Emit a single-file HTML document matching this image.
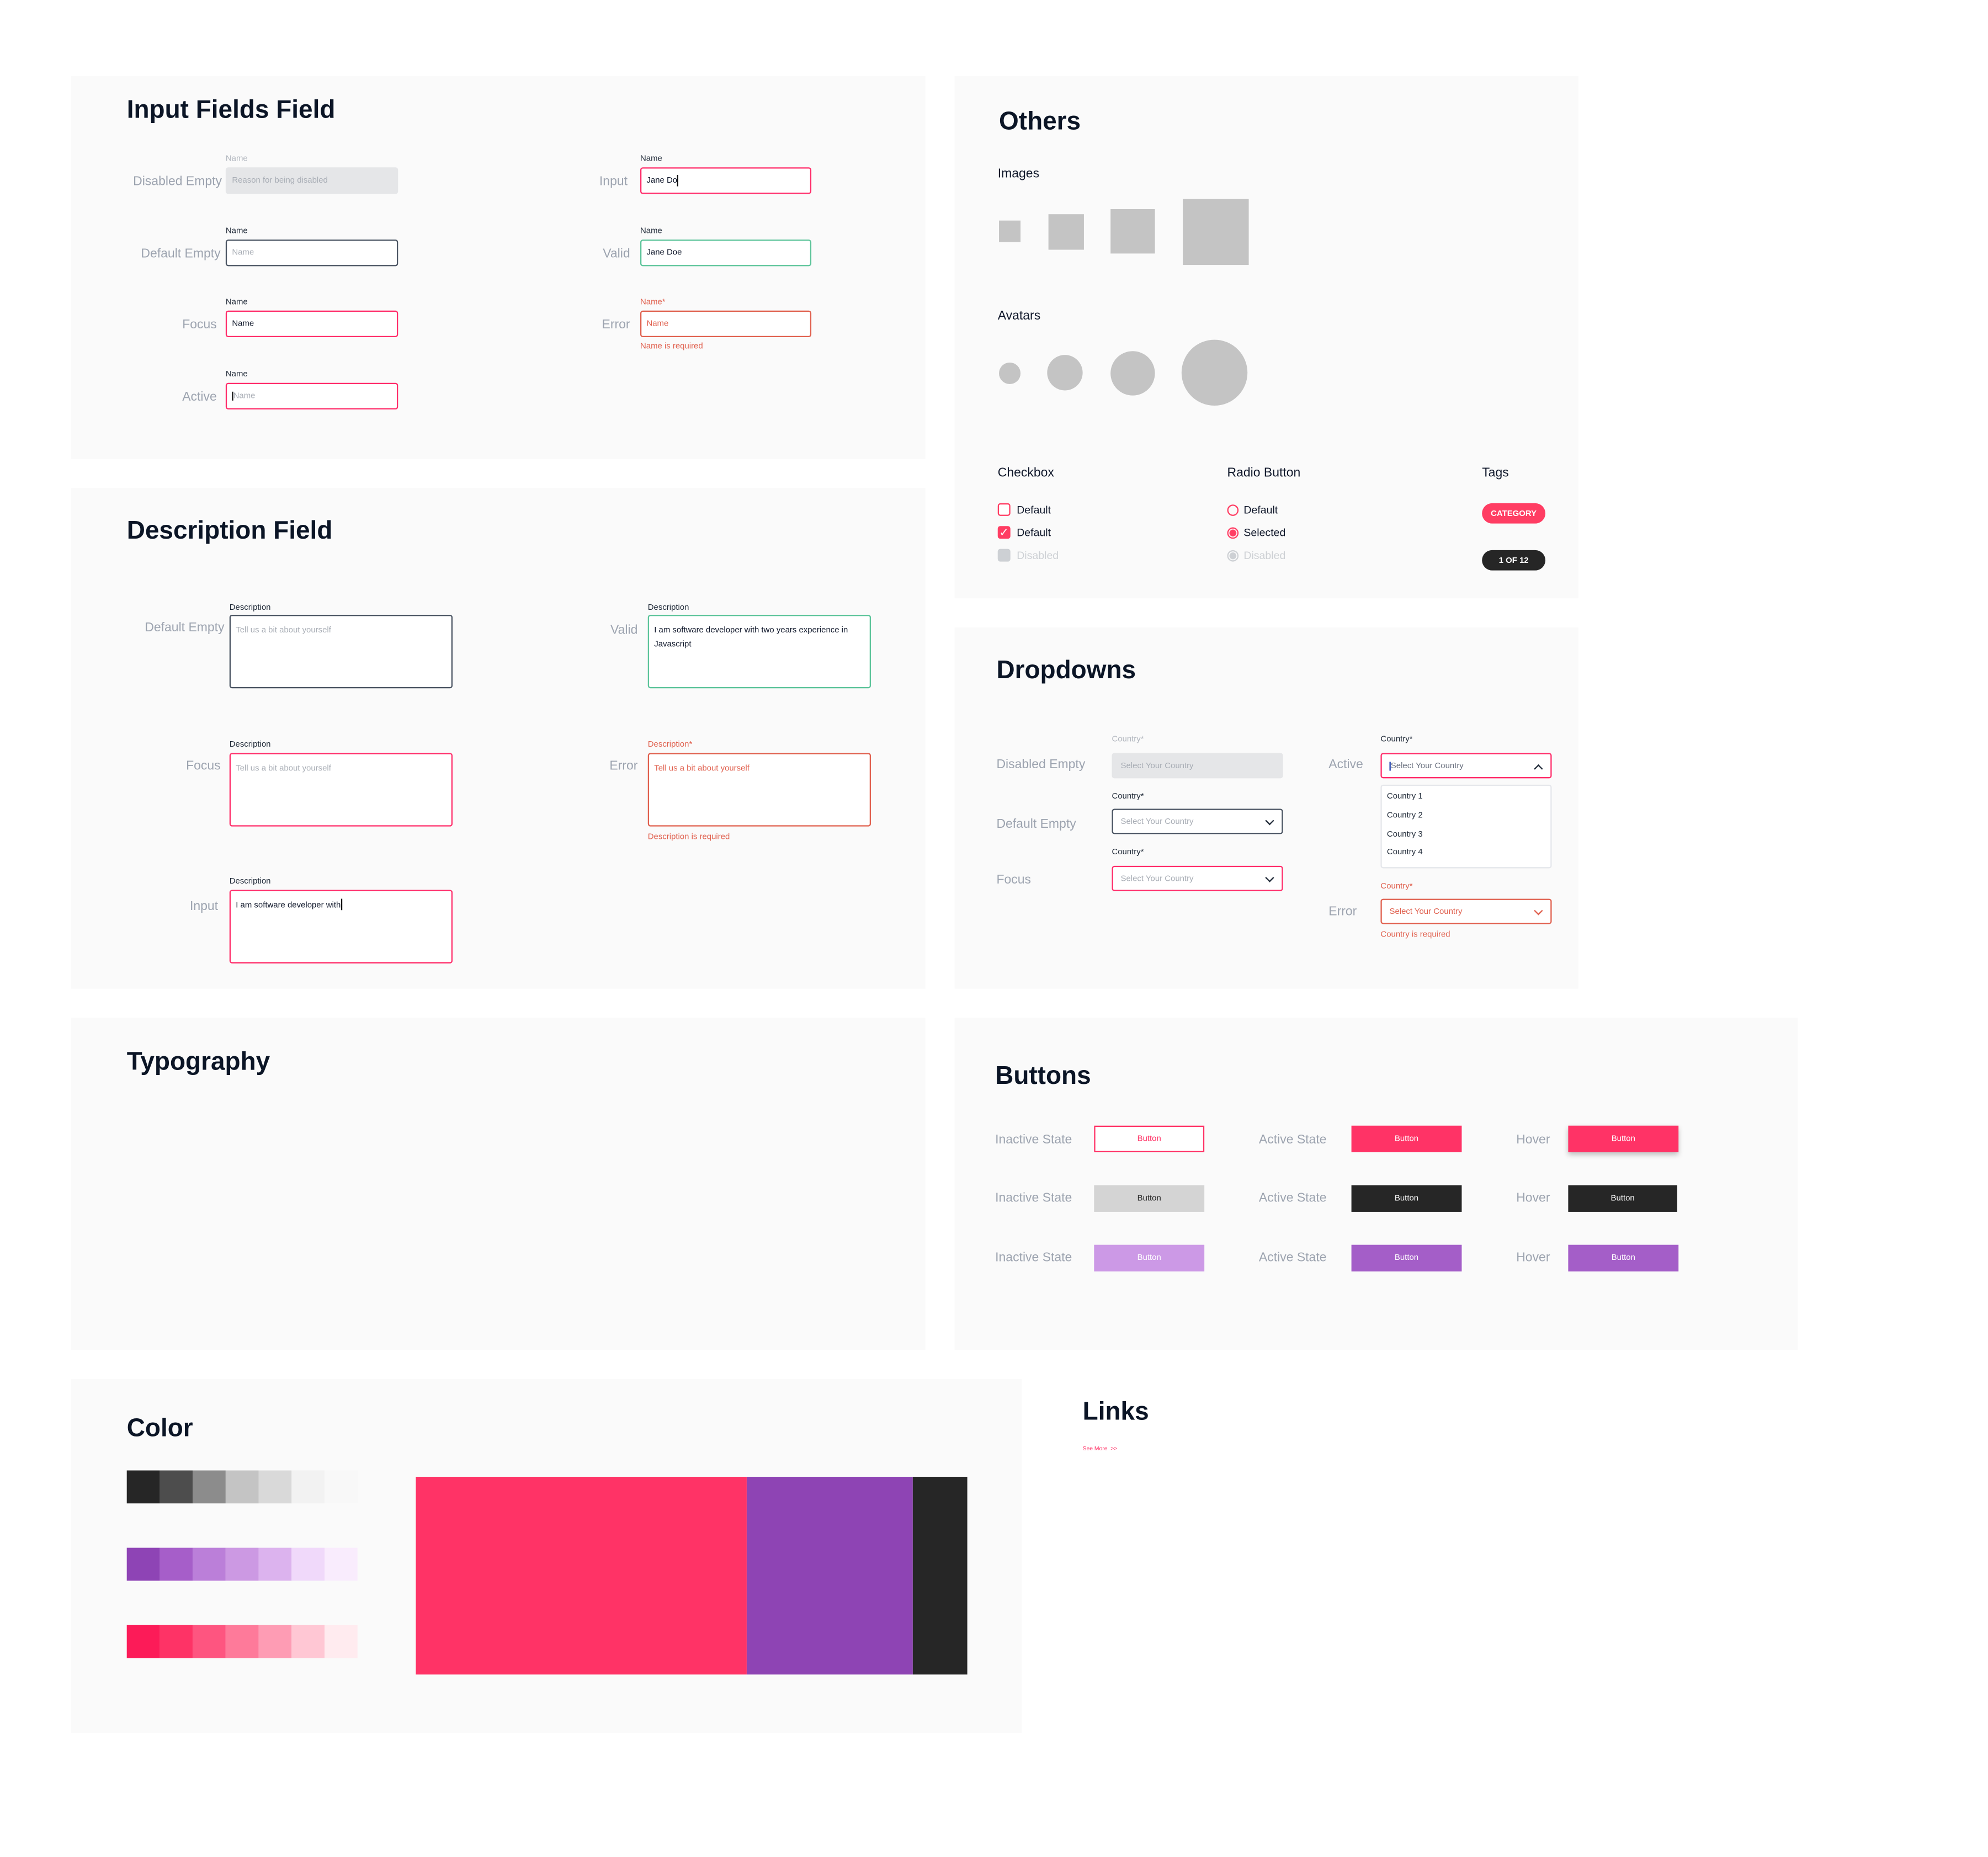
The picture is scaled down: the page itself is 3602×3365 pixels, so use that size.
<!DOCTYPE html>
<html><head><meta charset="utf-8">
<style>
html,body{margin:0;padding:0;background:#fff;}
body{width:3602px;height:3361px;overflow:hidden;}
#w{position:absolute;left:0;top:0;width:1570px;height:1465px;transform:scale(2.297);transform-origin:0 0;font-family:"Liberation Sans",sans-serif;color:#0f172a;}
.p{position:absolute;background:#fafafa;}
.a{position:absolute;white-space:nowrap;}
h2{position:absolute;margin:0;font-size:20px;font-weight:bold;color:#0b1526;white-space:nowrap;}
.lab{position:absolute;font-size:10px;color:#9ca3af;white-space:nowrap;}
.sm{position:absolute;font-size:6.5px;color:#1f2937;white-space:nowrap;}
.box{position:absolute;background:#fff;border:0.6px solid #ff2d6a;border-radius:2px;box-sizing:border-box;font-size:6.5px;padding:0 4px;display:flex;align-items:center;white-space:nowrap;}
.ta{align-items:flex-start;padding-top:6px;line-height:11px;white-space:normal;}
.btn{position:absolute;width:87px;height:21px;font-size:6.5px;display:flex;align-items:center;justify-content:center;color:#fff;box-sizing:border-box;}
.sw{position:absolute;width:26px;height:26px;}
.chev{position:absolute;right:7px;top:6px;width:4px;height:4px;border-right:0.8px solid #1f2937;border-bottom:0.8px solid #1f2937;transform:rotate(45deg);}
</style></head><body><div id="w">

<!-- Input fields -->
<div class="p" style="left:56px;top:60px;width:674px;height:302px"></div>
<h2 style="left:100px;top:76px">Input Fields Field</h2>
<div class="sm" style="left:178px;top:122px;color:#b0b5bd">Name</div>
<div class="lab" style="right:1395px;top:138px">Disabled Empty</div>
<div class="box" style="left:178px;top:132px;width:136px;height:21px;background:#e5e6e8;border-color:#e5e6e8;color:#a8adb5">Reason for being disabled</div>
<div class="sm" style="left:178px;top:179px">Name</div>
<div class="lab" style="right:1396px;top:195px">Default Empty</div>
<div class="box" style="left:178px;top:189px;width:136px;height:21px;border-color:#4b5563;color:#a8adb5">Name</div>
<div class="sm" style="left:178px;top:235px">Name</div>
<div class="lab" style="right:1399px;top:251px">Focus</div>
<div class="box" style="left:178px;top:245px;width:136px;height:21px">Name</div>
<div class="sm" style="left:178px;top:292px">Name</div>
<div class="lab" style="right:1399px;top:308px">Active</div>
<div class="box" style="left:178px;top:302px;width:136px;height:21px;color:#a8adb5"><span style="border-left:0.6px solid #111">Name</span></div>

<div class="sm" style="left:505px;top:122px">Name</div>
<div class="lab" style="right:1075px;top:138px">Input</div>
<div class="box" style="left:505px;top:132px;width:135px;height:21px">Jane Do<span style="border-left:0.6px solid #111;height:9px"></span></div>
<div class="sm" style="left:505px;top:179px">Name</div>
<div class="lab" style="right:1073px;top:195px">Valid</div>
<div class="box" style="left:505px;top:189px;width:135px;height:21px;border-color:#5cc49a">Jane Doe</div>
<div class="sm" style="left:505px;top:235px;color:#e0604e">Name*</div>
<div class="lab" style="right:1073px;top:251px">Error</div>
<div class="box" style="left:505px;top:245px;width:135px;height:21px;border-color:#e0604e;color:#e0604e">Name</div>
<div class="sm" style="left:505px;top:270px;color:#e0604e">Name is required</div>

<!-- Description -->
<div class="p" style="left:56px;top:385px;width:674px;height:395px"></div>
<h2 style="left:100px;top:408px">Description Field</h2>
<div class="sm" style="left:181px;top:476px">Description</div>
<div class="lab" style="right:1393px;top:490px">Default Empty</div>
<div class="box ta" style="left:181px;top:485px;width:176px;height:58px;border-color:#4b5563;color:#a8adb5">Tell us a bit about yourself</div>
<div class="sm" style="left:181px;top:584px">Description</div>
<div class="lab" style="right:1396px;top:599px">Focus</div>
<div class="box ta" style="left:181px;top:594px;width:176px;height:58px;color:#a8adb5">Tell us a bit about yourself</div>
<div class="sm" style="left:181px;top:692px">Description</div>
<div class="lab" style="right:1398px;top:710px">Input</div>
<div class="box ta" style="left:181px;top:702px;width:176px;height:58px">I am software developer with<span style="border-left:0.6px solid #111;height:9px;display:inline-block;vertical-align:middle"></span></div>

<div class="sm" style="left:511px;top:476px">Description</div>
<div class="lab" style="right:1067px;top:492px">Valid</div>
<div class="box ta" style="left:511px;top:485px;width:176px;height:58px;border-color:#5cc49a">I am software developer with two years experience in Javascript</div>
<div class="sm" style="left:511px;top:584px;color:#e0604e">Description*</div>
<div class="lab" style="right:1067px;top:599px">Error</div>
<div class="box ta" style="left:511px;top:594px;width:176px;height:58px;border-color:#e0604e;color:#e0604e">Tell us a bit about yourself</div>
<div class="sm" style="left:511px;top:657px;color:#e0604e">Description is required</div>

<!-- Others -->
<div class="p" style="left:753px;top:60px;width:492px;height:412px"></div>
<h2 style="left:788px;top:85px">Others</h2>
<div class="a" style="left:787px;top:132px;font-size:10px">Images</div>
<div class="a" style="left:788px;top:174px;width:17px;height:17px;background:#c4c4c4"></div>
<div class="a" style="left:827px;top:169px;width:28px;height:28px;background:#c4c4c4"></div>
<div class="a" style="left:876px;top:165px;width:35px;height:35px;background:#c4c4c4"></div>
<div class="a" style="left:933px;top:157px;width:52px;height:52px;background:#c4c4c4"></div>
<div class="a" style="left:787px;top:244px;font-size:10px">Avatars</div>
<div class="a" style="left:788px;top:286px;width:17px;height:17px;border-radius:50%;background:#c4c4c4"></div>
<div class="a" style="left:826px;top:280px;width:28px;height:28px;border-radius:50%;background:#c4c4c4"></div>
<div class="a" style="left:876px;top:277px;width:35px;height:35px;border-radius:50%;background:#c4c4c4"></div>
<div class="a" style="left:932px;top:268px;width:52px;height:52px;border-radius:50%;background:#c4c4c4"></div>

<div class="a" style="left:787px;top:368px;font-size:10px">Checkbox</div>
<div class="a" style="left:787px;top:397px;width:10px;height:10px;border:0.8px solid #ff3d63;border-radius:2px;box-sizing:border-box;background:#fff"></div>
<div class="a" style="left:802px;top:397px;font-size:8.5px">Default</div>
<div class="a" style="left:787px;top:415px;width:10px;height:10px;background:#ff3d63;border-radius:2px;color:#fff;font-size:9px;line-height:10px;text-align:center">✓</div>
<div class="a" style="left:802px;top:415px;font-size:8.5px">Default</div>
<div class="a" style="left:787px;top:433px;width:10px;height:10px;background:#cdd0d4;border-radius:2px"></div>
<div class="a" style="left:802px;top:433px;font-size:8.5px;color:#cdd0d4">Disabled</div>

<div class="a" style="left:968px;top:368px;font-size:10px">Radio Button</div>
<div class="a" style="left:968px;top:398px;width:9px;height:9px;border:0.8px solid #ff3d63;border-radius:50%;box-sizing:border-box"></div>
<div class="a" style="left:981px;top:397px;font-size:8.5px">Default</div>
<div class="a" style="left:968px;top:416px;width:9px;height:9px;border:0.8px solid #ff3d63;border-radius:50%;box-sizing:border-box;background:radial-gradient(#ff3d63 0 2.5px,#fff 3px)"></div>
<div class="a" style="left:981px;top:415px;font-size:8.5px">Selected</div>
<div class="a" style="left:968px;top:434px;width:9px;height:9px;border:0.8px solid #cdd0d4;border-radius:50%;box-sizing:border-box;background:radial-gradient(#cdd0d4 0 2.5px,#fff 3px)"></div>
<div class="a" style="left:981px;top:433px;font-size:8.5px;color:#cdd0d4">Disabled</div>

<div class="a" style="left:1169px;top:368px;font-size:10px">Tags</div>
<div class="a" style="left:1169px;top:397px;width:50px;height:16px;border-radius:8px;background:#ff3d63;color:#fff;font-size:6.5px;font-weight:bold;display:flex;align-items:center;justify-content:center">CATEGORY</div>
<div class="a" style="left:1169px;top:434px;width:50px;height:16px;border-radius:8px;background:#262626;color:#fff;font-size:6.5px;font-weight:bold;display:flex;align-items:center;justify-content:center">1 OF 12</div>

<!-- Dropdowns -->
<div class="p" style="left:753px;top:495px;width:492px;height:285px"></div>
<h2 style="left:786px;top:518px">Dropdowns</h2>
<div class="sm" style="left:877px;top:580px;color:#b0b5bd">Country*</div>
<div class="lab" style="left:786px;top:598px">Disabled Empty</div>
<div class="box" style="left:877px;top:594px;width:135px;height:20px;background:#e5e6e8;border-color:#e5e6e8;color:#a8adb5;padding-left:6px">Select Your Country</div>
<div class="sm" style="left:877px;top:625px">Country*</div>
<div class="lab" style="left:786px;top:645px">Default Empty</div>
<div class="box" style="left:877px;top:638px;width:135px;height:20px;border-color:#4b5563;color:#a8adb5;padding-left:6px">Select Your Country<span class="chev"></span></div>
<div class="sm" style="left:877px;top:669px">Country*</div>
<div class="lab" style="left:786px;top:689px">Focus</div>
<div class="box" style="left:877px;top:683px;width:135px;height:20px;border-width:0.9px;color:#a8adb5;padding-left:6px">Select Your Country<span class="chev"></span></div>

<div class="sm" style="left:1089px;top:580px">Country*</div>
<div class="lab" style="left:1048px;top:598px">Active</div>
<div class="box" style="left:1089px;top:594px;width:135px;height:20px;border-width:0.9px;color:#6b7280;padding-left:6px"><span style="border-left:0.6px solid #1e40af">Select Your Country</span><span class="chev" style="transform:rotate(225deg);top:9px"></span></div>
<div class="a" style="left:1089px;top:619px;width:135px;height:66px;background:#fff;border:0.6px solid #e5e7eb;border-radius:2px;box-sizing:border-box"></div>
<div class="sm" style="left:1094px;top:625px">Country 1</div>
<div class="sm" style="left:1094px;top:640px">Country 2</div>
<div class="sm" style="left:1094px;top:655px">Country 3</div>
<div class="sm" style="left:1094px;top:669px">Country 4</div>
<div class="sm" style="left:1089px;top:696px;color:#e0604e">Country*</div>
<div class="lab" style="left:1048px;top:714px">Error</div>
<div class="box" style="left:1089px;top:709px;width:135px;height:20px;border-color:#e0604e;color:#e0604e;padding-left:6px">Select Your Country<span class="chev" style="border-color:#e0604e"></span></div>
<div class="sm" style="left:1089px;top:734px;color:#e0604e">Country is required</div>

<!-- Typography -->
<div class="p" style="left:56px;top:803px;width:674px;height:262px"></div>
<h2 style="left:100px;top:827px">Typography</h2>

<!-- Buttons -->
<div class="p" style="left:753px;top:803px;width:665px;height:262px"></div>
<h2 style="left:785px;top:838px">Buttons</h2>
<div class="lab" style="left:785px;top:894px">Inactive State</div>
<div class="lab" style="left:993px;top:894px">Active State</div>
<div class="lab" style="left:1196px;top:894px">Hover</div>
<div class="btn" style="left:863px;top:888px;background:#fff;border:0.7px solid #ff3366;color:#ff3366">Button</div>
<div class="btn" style="left:1066px;top:888px;background:#ff3366">Button</div>
<div class="btn" style="left:1237px;top:888px;background:#ff3366;box-shadow:0 2px 4px rgba(0,0,0,.25)">Button</div>
<div class="lab" style="left:785px;top:940px">Inactive State</div>
<div class="lab" style="left:993px;top:940px">Active State</div>
<div class="lab" style="left:1196px;top:940px">Hover</div>
<div class="btn" style="left:863px;top:935px;background:#d4d4d4;color:#262626">Button</div>
<div class="btn" style="left:1066px;top:935px;background:#262626">Button</div>
<div class="btn" style="left:1237px;top:935px;background:#262626;width:86px">Button</div>
<div class="lab" style="left:785px;top:987px">Inactive State</div>
<div class="lab" style="left:993px;top:987px">Active State</div>
<div class="lab" style="left:1196px;top:987px">Hover</div>
<div class="btn" style="left:863px;top:982px;background:#cc99e6">Button</div>
<div class="btn" style="left:1066px;top:982px;background:#a45ec8">Button</div>
<div class="btn" style="left:1237px;top:982px;background:#a45ec8">Button</div>

<!-- Color -->
<div class="p" style="left:56px;top:1088px;width:750px;height:279px"></div>
<h2 style="left:100px;top:1116px">Color</h2>
<div class="sw" style="left:100px;top:1160px;background:#262626"></div>
<div class="sw" style="left:126px;top:1160px;background:#4d4d4d"></div>
<div class="sw" style="left:152px;top:1160px;background:#8c8c8c"></div>
<div class="sw" style="left:178px;top:1160px;background:#c4c4c4"></div>
<div class="sw" style="left:204px;top:1160px;background:#d9d9d9"></div>
<div class="sw" style="left:230px;top:1160px;background:#f2f2f2"></div>
<div class="sw" style="left:256px;top:1160px;background:#f8f8f8"></div>
<div class="sw" style="left:100px;top:1221px;background:#8e44b5"></div>
<div class="sw" style="left:126px;top:1221px;background:#a65ec9"></div>
<div class="sw" style="left:152px;top:1221px;background:#bb7fd9"></div>
<div class="sw" style="left:178px;top:1221px;background:#cc99e3"></div>
<div class="sw" style="left:204px;top:1221px;background:#dcb3ee"></div>
<div class="sw" style="left:230px;top:1221px;background:#f0d9fa"></div>
<div class="sw" style="left:256px;top:1221px;background:#f9ecfd"></div>
<div class="sw" style="left:100px;top:1282px;background:#fc1b58"></div>
<div class="sw" style="left:126px;top:1282px;background:#fe3366"></div>
<div class="sw" style="left:152px;top:1282px;background:#fe5580"></div>
<div class="sw" style="left:178px;top:1282px;background:#fe7a9a"></div>
<div class="sw" style="left:204px;top:1282px;background:#fe9cb4"></div>
<div class="sw" style="left:230px;top:1282px;background:#ffc7d4"></div>
<div class="sw" style="left:256px;top:1282px;background:#ffebef"></div>
<div class="a" style="left:328px;top:1165px;width:261px;height:156px;background:#ff3366"></div>
<div class="a" style="left:589px;top:1165px;width:131px;height:156px;background:#8e44b4"></div>
<div class="a" style="left:720px;top:1165px;width:43px;height:156px;background:#262626"></div>

<!-- Links -->
<h2 style="left:854px;top:1103px">Links</h2>
<div class="a" style="left:854px;top:1140px;font-size:4.5px;color:#ff3366">See More &nbsp;&gt;&gt;</div>

</div></body></html>
